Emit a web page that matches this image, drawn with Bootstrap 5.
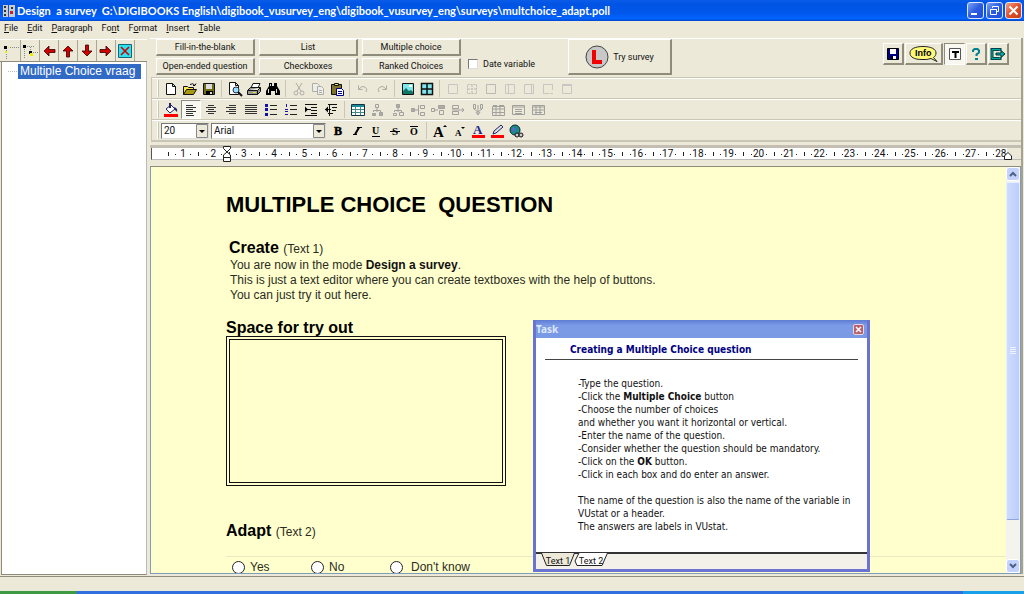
<!DOCTYPE html>
<html lang="en">
<head>
<meta charset="utf-8">
<meta name="viewport" content="width=device-width, initial-scale=1">
<title>Design a survey</title>
<link href="https://cdn.jsdelivr.net/npm/bootstrap@5.3.0/dist/css/bootstrap.min.css" rel="stylesheet">
<style>
:root{--face:#ece9d8;--shade:#8f8c7c;--soft:#c9c6b6;--paper:#ffffce}
body{background:var(--face);font:9px/12px Roboto,"Liberation Sans",sans-serif;color:#111;overflow:hidden}
button,select,input{font:inherit;color:inherit}
svg{display:block;flex:none}
/* title bar */
.titlebar{height:21px;gap:2px;background:linear-gradient(#0a5ce8,#0054e3 20%,#0057ea 60%,#0263ff 88%,#0047cc);color:#fff;padding:0 2px 0 3px}
.titlebar h1{font:bold 11px/20px Lato,sans-serif;white-space:pre;margin:0;flex:1}
.winbtn{width:17px;height:17px;padding:0;border:1px solid #dfe8ff;border-radius:3px;background:linear-gradient(135deg,#7ba2f5,#2a5be0 50%,#1f4fd8)}
.winbtn.quit{background:linear-gradient(135deg,#f0a088,#e0502c 50%,#c83a14)}
.menus{height:17px;padding:0 4px;gap:9px;line-height:15px}
.menus a{color:#111;text-decoration:none}
/* side tree */
.side{width:147px;padding-top:1px}
.sidebar-tools{height:23px;border-bottom:1px solid var(--shade);border-top:1px solid #fff;padding-left:2px}
.sidebar-tools button{width:19px;height:21px;padding:0;border:0;border-right:1px solid #a9a696;background:none;display:grid;place-items:center}
.tree{background:#fff;border:1px solid var(--shade);border-right-color:#bbb;border-top:0;margin-left:1px}
.node{display:flex;align-items:center;height:15px;margin-top:2px}
.node::before{content:"";width:9px;margin:0 1px 0 6px;border-top:1px dotted #bbb}
.node span{background:#316ac5;color:#fff;font:12px/15px "Liberation Sans",sans-serif;padding:0 2px;flex:1;margin-right:5px;white-space:nowrap}
/* control strip */
.work{border-right:2px solid #a5a295;margin:0 1px 1px 3px;min-width:0}
.strip{height:39px;border-top:1px solid #fff;padding-left:6px}
.qgrid{display:grid;grid-template-columns:repeat(3,99px);gap:2px 4px;height:36px}
.raised{border:1px solid #fff;border-right:2px solid var(--shade);border-bottom:2px solid var(--shade);background:var(--face);padding:0;line-height:12px}
.try{width:104px;height:36px}
.datevar{margin:19px 0 0 7px;height:12px;gap:5px;width:100px}
.datevar input{appearance:none;width:10px;height:10px;margin:0;background:#fff;border:1px solid #777;border-right-color:#ddd;border-bottom-color:#ddd}
.quick{margin:4px 12px 0 auto;height:22px;gap:1px}
.quick button{width:21px;display:grid;place-items:center}
.pressed{background:#f8f7f1;border:1px solid var(--shade);border-right-color:#fff;border-bottom-color:#fff;padding:0}
/* format toolbars */
.bars{border:1px solid var(--soft);border-right:0;margin-left:1px}
.bar{height:21px;border-bottom:1px solid var(--soft);border-top:1px solid #fff;padding-left:9px;align-items:center;display:flex}
.bar::before{content:"";width:2px;height:17px;border-left:1px solid #fff;border-right:1px solid var(--soft);margin:0 2px 0 -4px}
.bar button{width:19px;height:19px;border:0;background:none;padding:0;display:grid;place-items:center;flex:none}
.bar.wide button{width:20px}
.bar button.pressed{border:1px solid var(--shade);border-right-color:#fff;border-bottom-color:#fff;background:#f8f7f1}
.bar i{width:1px;height:17px;background:var(--soft);margin:0 3px}
.bar button:disabled{opacity:.75}
.pick{position:relative;height:16px;margin-right:2px}
.pick select{appearance:none;width:100%;height:16px;border:1px solid #777;border-right-color:#ddd;border-bottom-color:#ddd;background:#fff;padding:0 0 0 2px;font-size:10px;line-height:14px;border-radius:0;display:block}
.pick svg{position:absolute;right:1px;top:1px;pointer-events:none}
/* ruler */
.ruler-wrap{border-top:3px solid #c4beb2;margin-top:3px;padding-bottom:6px}
.ruler{height:12px;background:linear-gradient(90deg,#fff calc(100% - 14px),var(--face) 0);border-left:1px solid #555;border-bottom:1px solid #bbb;margin-left:1px;padding:0 5px 0 16px;display:grid;grid-template-columns:repeat(28,1fr);position:relative;font:10px/12px Roboto,sans-serif;text-align:center}
.ruler span{background:linear-gradient(#222,#222) 0 50%/1px 4px no-repeat,linear-gradient(#222,#222) 25% 50%/1px 1px no-repeat,linear-gradient(#222,#222) 76% 50%/1px 1px no-repeat}
.indent{position:absolute;top:-2px;left:70px}
.rindent{position:absolute;top:3px;right:9px}
/* editor */
.editor{border:1px solid #7f9db9;border-top-color:#8f8c7c;position:relative;min-height:0}
.doc{background:var(--paper);padding:25px 0 0 75px;font:12px/15px "Liberation Sans",sans-serif;color:#2b2b22;overflow:hidden}
.doc h2{font-size:22px;line-height:26px;font-weight:700;margin:0 0 21px;color:#000;white-space:pre}
.doc h3{font-size:16px;line-height:17px;font-weight:700;margin:0;color:#000}
.doc h3.lead-in{margin-left:3px}
.doc h3 small{font-size:12px;font-weight:400;color:#2b2b22}
.doc p{margin:0 0 16px 4px}
.doc b{color:#111}
.box{width:280px;height:150px;border:4px double #111;margin-bottom:36px}
.answers{border-top:1px solid #e9e9c4;height:18px;margin-top:15px;padding:3px 0 0 6px}
.answers label{display:flex;align-items:center;gap:5px;width:79px;height:14px;line-height:14px;white-space:nowrap}
.answers input{appearance:none;flex:none;width:13px;height:13px;border:1px solid #222;border-radius:50%;background:#fff;margin:0}
.vscroll{width:14px;background:#f5f3ee}
.vscroll button{height:14px;padding:0;border:1px solid #fff;border-radius:3px;background:#c3d3fd;display:grid;place-items:center;width:100%}
.thumb{height:338px;margin-top:1px;border:1px solid #e8eeff;border-bottom-color:#8ea6dc;border-radius:2px;background:linear-gradient(90deg,#cddcff,#bccdfb);display:grid;place-items:center}
/* floating task window */
.task{position:absolute;left:382px;top:153px;width:337px;height:252px;border:3px solid #6a73d2;border-top:0;background:#fff;font:10px/13px "DejaVu Sans Condensed",sans-serif;color:#111}
.task header{height:18px;background:linear-gradient(#5f7cd4,#7b9be6 30%,#7a99e4);color:#dfe8ff;font:bold 10px/19px "Noto Sans",sans-serif;padding:0 3px 0 0}
.task header button{width:11px;height:11px;border:1px solid #e6d6e0;border-radius:2px;background:#b8606c;padding:0;display:grid;place-items:center}
.task h4{font:bold 10px/13px "DejaVu Sans Condensed",sans-serif;color:#000080;margin:5px 9px 17px;padding:0 0 3px 25px;border-bottom:1px solid #444}
.task p{margin:0 0 13px 42px;white-space:nowrap}
.sheet{position:absolute;left:0;right:0;bottom:0;height:17px;border-top:2px solid #333;background:#f2f0e8;padding-left:5px;font:9px/12px Roboto,sans-serif}
.sheet button{border:0;background:none;padding:0;width:34px;height:13px;line-height:12px;position:relative;margin-right:-1px}
.sheet svg{position:absolute;left:0;top:-1px}
.sheet span{position:relative}
.status{height:15px;border-top:1px solid var(--shade);margin-top:1px}
.taskbar{height:3px;background:linear-gradient(90deg,#3f9a44 76px,#2f6fe0 77px,#2f6fe0 94%,#18a0ea 94%)}
</style>
</head>
<body class="d-flex flex-column vh-100">
<svg width="0" height="0" class="position-absolute"><defs>
<path id="ar" d="M13 8 8 3v3.500H2v3h6V13z" fill="#d00000" stroke="#300" stroke-width=".8"/>
</defs></svg>

<header class="titlebar d-flex align-items-center flex-shrink-0">
  <svg width="12" height="14" viewBox="0 0 12 14"><path fill="#ccc" d="M0 1h5v12H0zM6 1h6v12H6z"/><path fill="#333" d="M1 2h2v2H1zM1 6h2v2H1zM1 10h2v2H1zM8 3h2v2H8z"/><path fill="#c22" d="M7 7h3v3H7z"/></svg>
  <h1>Design  a survey  G:\DIGIBOOKS English\digibook_vusurvey_eng\digibook_vusurvey_eng\surveys\multchoice_adapt.poll</h1>
  <div class="d-flex" style="gap:2px">
    <button class="winbtn" aria-label="Minimize"><svg width="15" height="15"><path fill="#fff" d="M3 10h6v2H3z"/></svg></button>
    <button class="winbtn" aria-label="Restore"><svg width="15" height="15" fill="none" stroke="#fff"><path d="M5.500 5V3.500h6v5H10M3.500 6.500h6v5h-6zM3 6.500h7"/></svg></button>
    <button class="winbtn quit" aria-label="Close"><svg width="15" height="15"><path stroke="#fff" stroke-width="2" d="m3.500 3.500 8 8m0-8-8 8"/></svg></button>
  </div>
</header>
<nav class="menus d-flex flex-shrink-0">
  <a href="#"><u>F</u>ile</a><a href="#"><u>E</u>dit</a><a href="#"><u>P</u>aragraph</a><a href="#">Fo<u>n</u>t</a><a href="#">F<u>o</u>rmat</a><a href="#"><u>I</u>nsert</a><a href="#"><u>T</u>able</a>
</nav>

<main class="d-flex flex-grow-1" style="min-height:0">
  <aside class="side d-flex flex-column flex-shrink-0">
    <div class="sidebar-tools d-flex">
      <button aria-label="Add item"><svg width="16" height="16"><path stroke="#888" stroke-dasharray="1 1" d="M3.500 5v11M5 4.500h11"/><path d="M1 3h3v3H1z"/><path fill="#ee0" d="M2 8h2v2H2zM5 4h1v1H5z"/></svg></button>
      <button aria-label="Add subitem"><svg width="16" height="16"><path stroke="#888" stroke-dasharray="1 1" d="M2.500 4v12M3 3.500h10M8.500 4v5M9 9.500h7"/><path d="M1 2h3v3H1zM7 8h3v3H7z"/><path fill="#ee0" d="M8 10h3v3H8z"/></svg></button>
      <button aria-label="Left"><svg width="16" height="16"><use href="#ar" transform="rotate(180 8 8)"/></svg></button>
      <button aria-label="Up"><svg width="16" height="16"><use href="#ar" transform="rotate(-90 8 8)"/></svg></button>
      <button aria-label="Down"><svg width="16" height="16"><use href="#ar" transform="rotate(90 8 8)"/></svg></button>
      <button aria-label="Right"><svg width="16" height="16"><use href="#ar"/></svg></button>
      <button aria-label="Delete"><svg width="16" height="16"><path fill="#2fe0ee" stroke="#167" d="M1.500 1.500h13v13h-13z"/><path stroke="#d00000" stroke-width="1.600" d="m4 4 8 8m0-8-8 8"/></svg></button>
    </div>
    <div class="tree flex-grow-1"><div class="node"><span>Multiple Choice vraag</span></div></div>
  </aside>

  <section class="work d-flex flex-column flex-grow-1">
    <div class="strip d-flex flex-shrink-0">
      <div class="qgrid">
        <button class="raised">Fill-in-the-blank</button><button class="raised">List</button><button class="raised">Multiple choice</button>
        <button class="raised">Open-ended question</button><button class="raised">Checkboxes</button><button class="raised">Ranked Choices</button>
      </div>
      <div class="datevar d-flex align-items-center"><input type="checkbox" id="dv"><label for="dv">Date variable</label></div>
      <button class="raised try d-flex align-items-center justify-content-center gap-1"><svg width="24" height="24"><circle cx="12" cy="12" r="11" fill="#c8c8c8" stroke="#444"/><path fill="#f00000" d="M7 5h4v10h6v4H7z"/></svg>Try survey</button>
      <div class="quick d-flex">
        <button class="raised" aria-label="Save"><svg width="14" height="14"><path fill="#000080" stroke="#000" d="M1.500 1.500h11v11h-11z"/><path fill="#fff" d="M4 2h6v5H4zM5 9h5v3H5z"/><path d="M5 9h2v3H5z"/></svg></button>
        <button class="raised" style="width:38px" aria-label="Info"><svg width="32" height="18"><path fill="#fff97a" stroke="#222" d="M23 13.500Q19 15 14 14.500C6 14.500 2 12 2 8s5-6.500 13-6.500S28 4 28 8c0 2-1 3.500-2.500 4.500L29 16.500z"/><text x="7" y="11" font-family="Liberation Sans" font-weight="700" font-size="9">Info</text></svg></button>
        <button class="pressed" aria-label="Text"><svg width="14" height="14"><path fill="#fff" stroke="#555" d="M1.500 1.500h11v11h-11z"/><path d="M4 4h7v2H8.500v5h-2V6H4z"/></svg></button>
        <button class="raised" aria-label="Help"><svg width="12" height="14"><path fill="none" stroke="#008090" stroke-width="2" d="M3 5V3.500L4.500 2h3L9 3.500v2L6.500 7.500V9"/><path fill="#008090" d="M5 11h3v2H5z"/></svg></button>
        <button class="raised" aria-label="Exit"><svg width="18" height="14"><path fill="none" stroke="#044" stroke-width="3" d="M11 4V2.500H3v9h8V10"/><path fill="none" stroke="#0aa" d="M11 4V2.500H3v9h8V10"/><path fill="#0aa" stroke="#033" d="M7 6h5V3.500L16 7l-4 3.500V8H7z"/></svg></button>
      </div>
    </div>

    <div class="bars flex-shrink-0">
      <div class="bar">
        <button aria-label="New"><svg width="16" height="16"><path fill="#fff" stroke="#111" d="M3.500 2.500h6l3 3v8h-9zM9.500 2.500v3h3"/></svg></button>
        <button aria-label="Open"><svg width="16" height="16"><path fill="#ffe84a" stroke="#111" d="M1.500 13.500v-8h4l1 1h5v2"/><path fill="#a89a10" stroke="#111" d="m1.500 13.500 3-5h10l-3 5z"/><path fill="none" stroke="#111" d="M8 3.500q3-2 5 1l1-2m-1 2-2 0"/></svg></button>
        <button aria-label="Save"><svg width="16" height="16"><path fill="#6b6b18" stroke="#111" d="M2.500 2.500h11v11h-11z"/><path fill="#ddd" d="M5 3h6v5H5z"/><path d="M5 10h7v4H5z"/><path fill="#ddd" d="M9 11h2v2H9z"/></svg></button>
        <i></i>
        <button aria-label="Preview"><svg width="16" height="16"><path fill="#fff" stroke="#111" d="M2.500 1.500h6l3 3v9h-9zM8.500 1.500v3h3"/><circle cx="9" cy="9" r="3" fill="#9df" stroke="#234"/><path stroke="#111" stroke-width="2" d="m11 11 4 4"/></svg></button>
        <button aria-label="Print"><svg width="16" height="16"><path fill="#fff" stroke="#111" d="M5 7 7 2.500h7L12 7"/><path fill="#999" stroke="#111" d="m1.500 9.500 3-3h10v4l-3 3h-10zM2 9.500h9.500l3-3M11.500 9.500v4"/><path fill="#dd3" d="M7 11h3v1H7z"/></svg></button>
        <button aria-label="Find"><svg width="16" height="16"><path d="M4 2h3v3h2V2h3v3l3 5v4h-5v-4H6v4H1v-4l3-5z"/><path stroke="#ddd" d="M3.500 8v4M11.500 8v4M5.500 3v2"/></svg></button>
        <i></i>
        <button disabled aria-label="Cut"><svg width="16" height="16" fill="none" stroke="#999"><path d="m5 2 5 8M11 2 6 10"/><circle cx="5" cy="12" r="2"/><circle cx="11" cy="12" r="2"/></svg></button>
        <button disabled aria-label="Copy"><svg width="16" height="16" fill="#eee" stroke="#999"><path d="M2.500 2.500h5l2 2v6h-7z"/><path d="M7.500 5.500h4l2 2v6h-6zM9 9.500h3M9 11.500h3"/></svg></button>
        <button aria-label="Paste"><svg width="16" height="16"><path fill="#7c7428" stroke="#111" d="M2.500 3.500h10v10h-10z"/><path fill="#dd6" stroke="#111" d="M5.500 4.500v-2h4v2z"/><path fill="#fff" stroke="#000080" d="M7.500 7.500h5l2 2v5h-7zM9 10.500h4M9 12.500h4"/></svg></button>
        <i></i>
        <button disabled aria-label="Undo"><svg width="16" height="16" fill="none" stroke="#999"><path d="M4 8q3-4 6-2t1 5M3.500 4.500v4h4"/></svg></button>
        <button disabled aria-label="Redo"><svg width="16" height="16" fill="none" stroke="#999"><path d="M12 8q-3-4-6-2t-1 5M12.500 4.500v4h-4"/></svg></button>
        <i></i>
        <button aria-label="Picture"><svg width="16" height="16"><path fill="#7fe6ee" stroke="#111" d="M2.500 2.500h11v11h-11z"/><path fill="#176" d="m3 10 3-3 3 3 2-1 2 2v2H3z"/><path fill="#fff" d="M9 4h3v2H9z"/></svg></button>
        <button aria-label="Grid"><svg width="16" height="16"><path fill="#7fe6ee" stroke="#111" stroke-width="1.500" d="M2.500 2.500h11v11h-11zM8 2.500v11M2.500 8h11"/></svg></button>
        <i></i>
        <button disabled aria-label="No border"><svg width="16" height="16" fill="none" stroke="#bbb"><path d="M3.500 3.500h9v9h-9z"/></svg></button>
        <button disabled aria-label="All borders"><svg width="16" height="16" fill="none" stroke="#aaa"><path d="M3.500 3.500h9v9h-9zM8 4v8M4 8h8" stroke-dasharray="2 1"/></svg></button>
        <button disabled aria-label="Outer border"><svg width="16" height="16" fill="none" stroke="#aaa"><path d="M3.500 3.500h9v9h-9z"/></svg></button>
        <button disabled aria-label="Left border"><svg width="16" height="16" fill="none" stroke="#bbb"><path d="M3.500 3.500h9v9h-9zM6.500 4v8"/></svg></button>
        <button disabled aria-label="Right border"><svg width="16" height="16" fill="none" stroke="#bbb"><path d="M3.500 3.500h9v9h-9zM10.500 4v8"/></svg></button>
        <button disabled aria-label="Bottom border"><svg width="16" height="16" fill="none" stroke="#bbb"><path d="M12.500 9V3.500h-9v9H9M10 12.500h3"/></svg></button>
        <button disabled aria-label="Top border"><svg width="16" height="16" fill="none" stroke="#bbb"><path d="M3.500 3.500h9v9h-9zM4 4.500h8"/></svg></button>
      </div>
      <div class="bar wide">
        <button aria-label="Fill colour"><svg width="16" height="16"><path fill="#fff" stroke="#226" d="m3 7 5-4 4 4-5 4z"/><path fill="#226" d="M11 5q4 1 3 5l-2-2zM6 1h2v5H6z"/><path fill="#f00" d="M1 12h14v3H1z"/></svg></button>
        <button class="pressed" aria-label="Align left"><svg width="14" height="14" stroke="#333"><path d="M2 2.500h7M2 4.500h10M2 6.500h7M2 8.500h10M2 10.500h7M2 12.500h8"/></svg></button>
        <button aria-label="Centre"><svg width="14" height="14" stroke="#333"><path d="M4 2.500h6M2 4.500h10M4 6.500h6M2 8.500h10M4 10.500h6"/></svg></button>
        <button aria-label="Align right"><svg width="14" height="14" stroke="#333"><path d="M5 2.500h7M2 4.500h10M5 6.500h7M2 8.500h10M5 10.500h7"/></svg></button>
        <button aria-label="Justify"><svg width="14" height="14" stroke="#333"><path d="M1 2.500h12M1 4.500h12M1 6.500h12M1 8.500h12M1 10.500h12"/></svg></button>
        <button aria-label="Bullets"><svg width="14" height="14"><path fill="#11a" d="M1 1h3v3H1zM1 5h3v3H1zM1 10h3v3H1z"/><path stroke="#222" d="M6 2.500h7M6 6.500h7M6 11.500h7"/></svg></button>
        <button aria-label="Numbering"><svg width="14" height="14"><path stroke="#11a" d="M2.500 1v3M1 6.500h3M1 8.500h3M1 11.500h3"/><path stroke="#222" d="M6 2.500h7M6 6.500h7M6 11.500h7"/></svg></button>
        <button aria-label="Outdent"><svg width="14" height="14"><path stroke="#111" d="M1 1.500h12M7 4.500h6M7 7.500h6M1 12.500h12M7 10.500h6M1 6.500h6"/><path d="M1 3.500v6l3-3z"/></svg></button>
        <button aria-label="Indent"><svg width="14" height="14"><path stroke="#111" d="M4 1.500h9M8 4.500h5M8 7.500h4M4 10.500h5M1 6.500h6M5.500 1v12"/><path d="M4 3.500v6l-3-3z"/></svg></button>
        <i></i>
        <button aria-label="Insert table"><svg width="16" height="16"><path fill="#fff" stroke="#134" d="M1.500 2.500h13v11h-13z"/><path fill="#1a8a96" d="M2 3h12v2H2z"/><path stroke="#488" d="M2 7.500h12M2 10.500h12M5.500 5v8M10.500 5v8"/></svg></button>
        <button disabled aria-label="Split table"><svg width="16" height="16" fill="none" stroke="#888"><path d="M5.500 2.500h3v3h-3zM7 6v4M3.500 10V8.500h7V10"/><path fill="#999" d="M2.500 11.500h3v2h-3zM9.500 10.500h3v3h-3z"/></svg></button>
        <button disabled aria-label="Split cell"><svg width="16" height="16" fill="none" stroke="#888"><path fill="#999" d="M6.500 2.500h3v3h-3z"/><path d="M8 6v4M4.500 10V8.500h7V10M3.500 11.500h3v2h-3zM9.500 10.500h4v3h-4z"/></svg></button>
        <button disabled aria-label="Row before"><svg width="16" height="16" fill="none" stroke="#888"><path fill="#999" d="M1.500 6.500h3v3h-3z"/><path d="M5 8h4M8.500 3v10M10.500 3.500h4v3h-4zM10.500 10.500h4v3h-4z"/></svg></button>
        <button disabled aria-label="Row after"><svg width="16" height="16" fill="none" stroke="#888"><path d="M1.500 6.500h3v3h-3zM5 8h3M9.500 8.500h4v4h-4z"/><path fill="#999" d="M8.500 3.500h6v3h-6z"/></svg></button>
        <button disabled aria-label="Delete row"><svg width="16" height="16" fill="none" stroke="#888"><path d="M2.500 3.500h6v3h-6zM2.500 9.500h6v3h-6zM2 8h12M12 6l2 2-2 2"/></svg></button>
        <button disabled aria-label="Column"><svg width="16" height="16" fill="none" stroke="#888"><path d="M3.500 2.500h2v4h-2zM10.500 2.500h2v4h-2zM8 3v9M4 7l4 3 4-3M6 10l2 3 2-3"/></svg></button>
        <button disabled aria-label="Delete table"><svg width="16" height="16" fill="none" stroke="#888"><path d="M2.500 4.500h12v9h-12zM2 7h12M2 10.500h12M6 5v9M10 5v9M3 3.500h4M9 3.500h5"/></svg></button>
        <button disabled aria-label="Cell"><svg width="16" height="16" fill="none" stroke="#888"><path d="M2.500 3.500h12v9h-12zM3 5h11M5 7.500h7M5 9.500h7M5 11.500h7"/></svg></button>
        <button disabled aria-label="Cells"><svg width="16" height="16" fill="none" stroke="#888"><path d="M2.500 3.500h12v9h-12zM3 5h11M3 8h11M5 10.500h7M6 4v8M10 4v8"/></svg></button>
      </div>
      <div class="bar">
        <div class="pick" style="width:48px"><select aria-label="Font size"><option>20</option></select><svg width="12" height="14"><path fill="#ece9d8" stroke="#888" d="M.5.500h11v13H.5z"/><path d="M3 6h6L6 9z"/></svg></div>
        <div class="pick" style="width:115px"><select aria-label="Font"><option>Arial</option></select><svg width="12" height="14"><path fill="#ece9d8" stroke="#888" d="M.5.500h11v13H.5z"/><path d="M3 6h6L6 9z"/></svg></div>
        <button aria-label="Bold"><svg width="16" height="16"><text x="4" y="12" font-family="Liberation Serif" font-weight="700" font-size="12" stroke="#000" stroke-width=".5">B</text></svg></button>
        <button aria-label="Italic"><svg width="16" height="16"><path stroke="#000" stroke-width="2" d="M10 4.500 6 11.500"/><path stroke="#000" d="M8 4.500h5M4 11.500h4"/></svg></button>
        <button aria-label="Underline"><svg width="16" height="16"><text x="4" y="11" font-family="Liberation Serif" font-weight="700" font-size="10">U</text><path stroke="#000" d="M4 13.500h8"/></svg></button>
        <button aria-label="Strikethrough"><svg width="16" height="16"><text x="5" y="12" font-family="Liberation Serif" font-weight="700" font-size="11">S</text><path stroke="#000" d="M3 8.500h10"/></svg></button>
        <button aria-label="Overline"><svg width="16" height="16"><text x="4" y="12" font-family="Liberation Serif" font-weight="700" font-size="10">O</text><path stroke="#000" d="M4 3.500h8"/></svg></button>
        <i></i>
        <button aria-label="Grow"><svg width="16" height="16"><text x="1" y="14" font-family="Liberation Serif" font-weight="700" font-size="15">A</text><path d="m11 4 2-2 2 2z"/></svg></button>
        <button aria-label="Shrink"><svg width="16" height="16"><text x="4" y="13" font-family="Liberation Serif" font-weight="700" font-size="9">A</text><path d="m10 4 2 2 2-2z"/></svg></button>
        <button aria-label="Text colour"><svg width="16" height="16"><text x="3" y="11" font-family="Liberation Serif" font-weight="700" font-size="13" fill="#22228a">A</text><path fill="#f00" d="M2 12h13v3H2z"/></svg></button>
        <button aria-label="Highlight"><svg width="16" height="16"><path fill="#dde" stroke="#225" d="m4 11 1-3 7-6 2 2-7 6z"/><path fill="#f00" d="M2 12h13v3H2z"/></svg></button>
        <button aria-label="Link"><svg width="16" height="16"><circle cx="7" cy="7" r="5" fill="#1d8a8a" stroke="#123"/><path fill="#56c" d="M4 5h3v3H4z"/><circle cx="9" cy="12" r="2" fill="#ccc" stroke="#111"/><circle cx="13" cy="12" r="2" fill="#ccc" stroke="#111"/></svg></button>
      </div>
    </div>

    <div class="ruler-wrap flex-shrink-0">
      <div class="ruler" id="ruler">
        <svg class="indent" width="10" height="16" fill="#fff" stroke="#222"><path d="M1.500.500h7v2L5 6 1.500 2.500zM5 6l3.500 3v2.500h-7V9zM1.500 11.500h7v4h-7z"/></svg>
        <svg class="rindent" width="8" height="9" fill="#fff" stroke="#222"><path d="M.5 8.500V5L4 1.500 7.500 5v3.500z"/></svg>
      </div>
    </div>

    <div class="editor d-flex flex-grow-1">
      <article class="doc flex-grow-1">
        <h2>MULTIPLE CHOICE  QUESTION</h2>
        <h3 class="lead-in">Create <small>(Text 1)</small></h3>
        <p>You are now in the mode <b>Design a survey</b>.<br>This is just a text editor where you can create textboxes with the help of buttons.<br>You can just try it out here.</p>
        <h3>Space for try out</h3>
        <div class="box"></div>
        <h3>Adapt <small>(Text 2)</small></h3>
        <div class="answers d-flex">
          <label><input type="radio" name="answer">Yes</label><label><input type="radio" name="answer">No</label><label style="gap:8px"><input type="radio" name="answer">Don't know</label>
        </div>
      </article>
      <div class="vscroll d-flex flex-column flex-shrink-0">
        <button aria-label="Scroll up"><svg width="8" height="6" fill="none" stroke="#4d6185" stroke-width="2"><path d="m1 5 3-3 3 3"/></svg></button>
        <div class="thumb"><svg width="6" height="8" stroke="#eef4ff"><path d="M0 .5h6M0 2.500h6M0 4.500h6M0 6.500h6"/></svg></div>
        <button class="mt-auto" aria-label="Scroll down"><svg width="8" height="6" fill="none" stroke="#4d6185" stroke-width="2"><path d="m1 1 3 3 3-3"/></svg></button>
      </div>
      <div class="task" role="dialog" aria-label="Task">
        <header class="d-flex justify-content-between align-items-center"><span>Task</span><button aria-label="Close task"><svg width="9" height="9"><path stroke="#fff" stroke-width="1.500" d="m2 2 5 5m0-5-5 5"/></svg></button></header>
        <h4>Creating a Multiple Choice question</h4>
        <p>-Type the question.<br>-Click the <b>Multiple Choice</b> button<br>-Choose the number of choices<br>and whether you want it horizontal or vertical.<br>-Enter the name of the question.<br>-Consider whether the question should be mandatory.<br>-Click on the <b>OK</b> button.<br>-Click in each box and do enter an answer.</p>
        <p>The name of the question is also the name of the variable in<br>VUstat or a header.<br>The answers are labels in VUstat.</p>
        <div class="sheet d-flex">
          <button><svg width="34" height="13"><path fill="#ece9d8" stroke="#222" d="m.500 0 5 12.500h23L33.500 0"/></svg><span>Text 1</span></button>
          <button><svg width="34" height="13"><path fill="#fff" stroke="#222" d="m5 0-4 8 2 4.500h25L33.500 0"/></svg><span>Text 2</span></button>
        </div>
      </div>
    </div>
  </section>
</main>
<footer class="flex-shrink-0"><div class="status"></div><div class="taskbar"></div></footer>
<script src="https://cdn.jsdelivr.net/npm/bootstrap@5.3.0/dist/js/bootstrap.bundle.min.js"></script>
<script>
const ruler=document.getElementById('ruler');
for(let cm=1;cm<=28;cm++){const s=document.createElement('span');s.textContent=cm;ruler.append(s)}
</script>
</body>
</html>
